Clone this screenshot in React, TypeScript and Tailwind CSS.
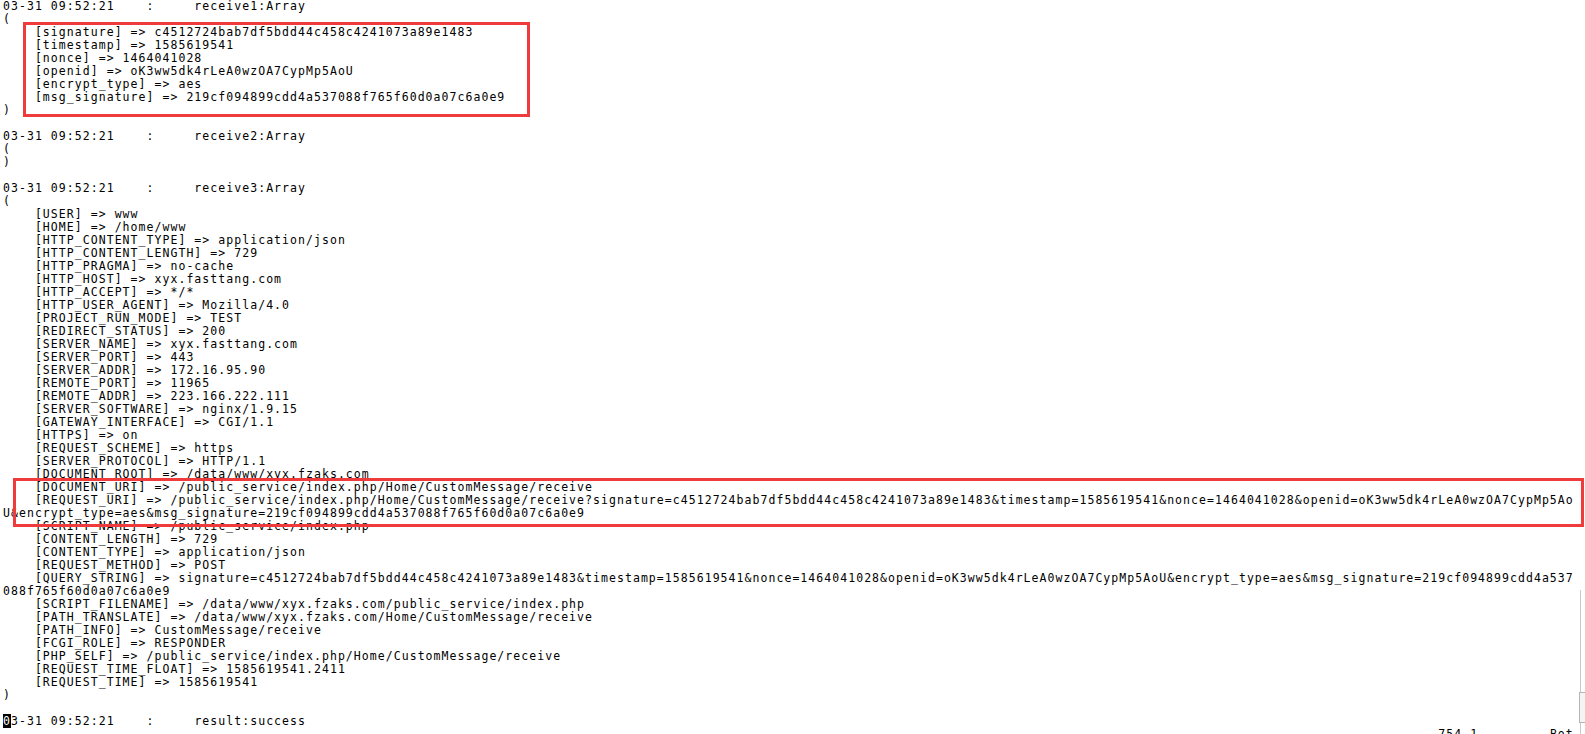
import React from 'react';

const head = (msg: string) => `03-31 09:52:21    :     ${msg}`;

const lines: string[] = [
  head('receive1:Array'),
  '(',
  '    [signature] => c4512724bab7df5bdd44c458c4241073a89e1483',
  '    [timestamp] => 1585619541',
  '    [nonce] => 1464041028',
  '    [openid] => oK3ww5dk4rLeA0wzOA7CypMp5AoU',
  '    [encrypt_type] => aes',
  '    [msg_signature] => 219cf094899cdd4a537088f765f60d0a07c6a0e9',
  ')',
  '',
  head('receive2:Array'),
  '(',
  ')',
  '',
  head('receive3:Array'),
  '(',
  '    [USER] => www',
  '    [HOME] => /home/www',
  '    [HTTP_CONTENT_TYPE] => application/json',
  '    [HTTP_CONTENT_LENGTH] => 729',
  '    [HTTP_PRAGMA] => no-cache',
  '    [HTTP_HOST] => xyx.fasttang.com',
  '    [HTTP_ACCEPT] => */*',
  '    [HTTP_USER_AGENT] => Mozilla/4.0',
  '    [PROJECT_RUN_MODE] => TEST',
  '    [REDIRECT_STATUS] => 200',
  '    [SERVER_NAME] => xyx.fasttang.com',
  '    [SERVER_PORT] => 443',
  '    [SERVER_ADDR] => 172.16.95.90',
  '    [REMOTE_PORT] => 11965',
  '    [REMOTE_ADDR] => 223.166.222.111',
  '    [SERVER_SOFTWARE] => nginx/1.9.15',
  '    [GATEWAY_INTERFACE] => CGI/1.1',
  '    [HTTPS] => on',
  '    [REQUEST_SCHEME] => https',
  '    [SERVER_PROTOCOL] => HTTP/1.1',
  '    [DOCUMENT_ROOT] => /data/www/xyx.fzaks.com',
  '    [DOCUMENT_URI] => /public_service/index.php/Home/CustomMessage/receive',
  '    [REQUEST_URI] => /public_service/index.php/Home/CustomMessage/receive?signature=c4512724bab7df5bdd44c458c4241073a89e1483&timestamp=1585619541&nonce=1464041028&openid=oK3ww5dk4rLeA0wzOA7CypMp5Ao',
  'U&encrypt_type=aes&msg_signature=219cf094899cdd4a537088f765f60d0a07c6a0e9',
  '    [SCRIPT_NAME] => /public_service/index.php',
  '    [CONTENT_LENGTH] => 729',
  '    [CONTENT_TYPE] => application/json',
  '    [REQUEST_METHOD] => POST',
  '    [QUERY_STRING] => signature=c4512724bab7df5bdd44c458c4241073a89e1483&timestamp=1585619541&nonce=1464041028&openid=oK3ww5dk4rLeA0wzOA7CypMp5AoU&encrypt_type=aes&msg_signature=219cf094899cdd4a537',
  '088f765f60d0a07c6a0e9',
  '    [SCRIPT_FILENAME] => /data/www/xyx.fzaks.com/public_service/index.php',
  '    [PATH_TRANSLATE] => /data/www/xyx.fzaks.com/Home/CustomMessage/receive',
  '    [PATH_INFO] => CustomMessage/receive',
  '    [FCGI_ROLE] => RESPONDER',
  '    [PHP_SELF] => /public_service/index.php/Home/CustomMessage/receive',
  '    [REQUEST_TIME_FLOAT] => 1585619541.2411',
  '    [REQUEST_TIME] => 1585619541',
  ')',
  '',
];

export default function App() {
  return (
    <div className="relative h-[734px] w-[1585px] overflow-hidden bg-white text-black">
      <div className="whitespace-pre pl-[3px] font-['DejaVu_Sans_Mono',monospace] text-[11.5px] leading-[13px] tracking-[1.05px]">
        {lines.map((l, i) => (
          <div key={i} className="h-[13px]">
            {l || ' '}
          </div>
        ))}
        {/* last log line, cursor on first char */}
        <div className="h-[13px]">
          <span className="bg-black text-white">0</span>
          {head('result:success').slice(1)}
        </div>
        {/* vim ruler */}
        <div className="h-[13px]">
          {' '.repeat(180)}754,1{' '.repeat(9)}Bot
        </div>
      </div>

      {/* highlight boxes */}
      <div className="absolute left-[23px] top-[22px] h-[95px] w-[507px] border-[3px] border-[#ef3b3b]" />
      <div className="absolute left-[13px] top-[478px] h-[49px] w-[1571px] border-[3px] border-[#ef3b3b]" />

      {/* window scrollbar edge */}
      <div className="absolute right-[4px] top-[590px] bottom-0 w-px bg-[#c9c9c9]" />
      <div className="absolute right-0 top-[692px] h-[31px] w-[6px] border border-r-0 border-[#b5b5b5] bg-[#f4f4f4]" />
    </div>
  );
}
